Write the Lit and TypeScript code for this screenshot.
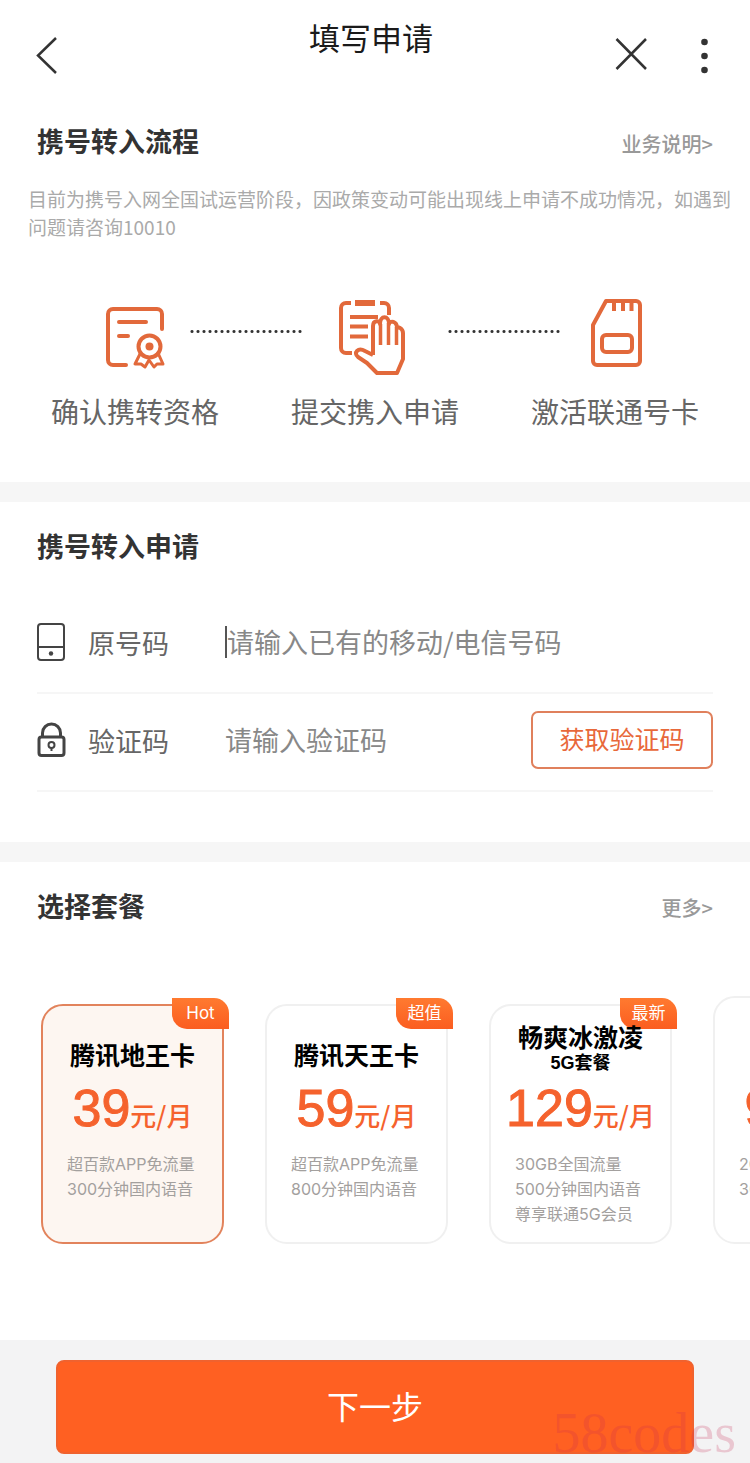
import { LitElement, html, css, nothing } from "lit";
import { customElement, property, state } from "lit/decorators.js";
import { classMap } from "lit/directives/class-map.js";

interface Plan {
  name: string;
  sub?: string;
  price: string;
  details: string[];
  badge?: string;
}

const PLANS: Plan[] = [
  { name: "腾讯地王卡", price: "39", details: ["超百款APP免流量", "300分钟国内语音"], badge: "Hot" },
  { name: "腾讯天王卡", price: "59", details: ["超百款APP免流量", "800分钟国内语音"], badge: "超值" },
  { name: "畅爽冰激凌", sub: "5G套餐", price: "129", details: ["30GB全国流量", "500分钟国内语音", "尊享联通5G会员"], badge: "最新" },
  { name: "", price: "99", details: ["20GB全国流量", "300分钟国内语音"] },
];

@customElement("plan-card")
export class PlanCard extends LitElement {
  @property({ attribute: false }) plan!: Plan;
  @property({ type: Boolean }) selected = false;

  static styles = css`
    :host {
      display: block;
      flex: none;
    }
    .card {
      position: relative;
      display: flex;
      flex-direction: column;
      box-sizing: border-box;
      width: 183px;
      min-height: 240px;
      padding: 0 0 13px;
      border: 2px solid #f0f0f0;
      border-radius: 22px;
      background: #fff;
      font: inherit;
      text-align: left;
      color: #000;
      cursor: pointer;
    }
    .tall {
      min-height: 248px;
      padding-top: 8px;
    }
    .selected {
      border-color: #e2835c;
      background: #fdf6f1;
    }
    .badge {
      position: absolute;
      top: -8px;
      right: -7px;
      width: 57px;
      border-radius: 0 15px 0 15px;
      background: linear-gradient(#ff7a30, #fb5d20);
      color: #fff;
      font-family: Inter, "Noto Sans CJK SC", sans-serif;
      font-size: 17px;
      line-height: 31px;
      text-align: center;
    }
    .head {
      position: relative;
      display: flex;
      flex-direction: column;
      justify-content: flex-end;
      align-items: center;
      height: 66px;
      font-weight: 700;
    }
    .name {
      font-size: 25px;
      line-height: 32px;
    }
    .sub {
      font-size: 18px;
      line-height: 18px;
    }
    .price {
      display: flex;
      justify-content: center;
      align-items: baseline;
      height: 80px;
      color: #f5622d;
      line-height: 72px;
    }
    .amount {
      font-size: 52px;
      -webkit-text-stroke: 1px currentColor;
    }
    .unit {
      font-family: "Noto Sans CJK SC", sans-serif;
      font-size: 26px;
      font-weight: 500;
    }
    .detail {
      padding-left: 24px;
      color: #a3a09e;
      font-family: Inter, "Noto Sans CJK SC", sans-serif;
      font-size: 16px;
      line-height: 25px;
      white-space: nowrap;
    }
  `;

  render() {
    const p = this.plan;
    return html`
      <button
        type="button"
        class=${classMap({ card: true, selected: this.selected, tall: !p.badge })}
        aria-pressed=${this.selected ? "true" : "false"}
      >
        ${p.badge ? html`<span class="badge">${p.badge}</span>` : nothing}
        <span class="head">
          <span class="name">${p.name}</span>
          ${p.sub ? html`<span class="sub">${p.sub}</span>` : nothing}
        </span>
        <span class="price"><span class="amount">${p.price}</span><span class="unit">元/月</span></span>
        ${p.details.map((d) => html`<span class="detail">${d}</span>`)}
      </button>
    `;
  }
}

@customElement("app-root")
export class AppRoot extends LitElement {
  @state() private selected = 0;

  static styles = css`
    :host {
      display: block;
      position: relative;
      background: #fff;
      color: #333;
      font-family: "Liberation Sans", "Noto Sans CJK SC", sans-serif;
    }
    * {
      box-sizing: border-box;
    }
    svg {
      display: block;
      fill: none;
      stroke: currentColor;
    }
    h1, h2, p, ol {
      margin: 0;
      padding: 0;
    }
    .header {
      display: grid;
      grid-template-columns: 1fr auto 1fr;
      align-items: start;
      height: 112px;
      padding: 16px 36px 0 28px;
    }
    .title {
      color: #1a1a1a;
      font-family: "Noto Sans CJK SC", sans-serif;
      font-size: 31px;
      font-weight: 400;
      line-height: 42px;
    }
    .icon-button {
      padding: 0;
      border: 0;
      background: none;
      color: #333;
      cursor: pointer;
    }
    .actions {
      display: flex;
      justify-content: flex-end;
      gap: 45px;
    }
    .section {
      padding: 0 37px;
      border-bottom: 20px solid #f6f6f6;
    }
    .section-head {
      display: flex;
      justify-content: space-between;
      align-items: center;
      height: 62px;
    }
    .section-title {
      font-size: 27px;
      font-weight: 700;
      line-height: 40px;
    }
    .link {
      color: #999;
      font-family: "Noto Sans CJK SC", sans-serif;
      font-size: 20px;
      font-weight: 500;
      text-decoration: none;
    }
    .notice {
      margin: 11px -19px 0 -9px;
      color: #aaa;
      font-family: "Noto Sans CJK SC", sans-serif;
      font-size: 19px;
      line-height: 28px;
    }
    .steps {
      display: flex;
      margin: 55px 14px 0;
      padding-bottom: 47px;
      list-style: none;
    }
    .step {
      display: flex;
      flex: none;
      flex-direction: column;
      align-items: center;
      gap: 17px;
      color: #666;
      font-size: 28px;
      line-height: 42px;
    }
    .step svg {
      color: #e2693b;
    }
    .dots {
      flex: 1;
      height: 3px;
      margin-top: 34px;
      background: radial-gradient(circle, #333 1px, transparent 2px) 0 0 / 6px 3px;
    }
    .dots-a {
      margin-left: -30px;
      margin-right: -12px;
    }
    .dots-b {
      margin-left: -12px;
      margin-right: -30px;
    }
    .apply {
      padding-top: 15px;
      padding-bottom: 50px;
    }
    .field {
      display: flex;
      align-items: center;
      height: 98px;
      padding-bottom: 4px;
      border-bottom: 2px solid #f6f6f6;
    }
    .fields {
      padding-top: 17px;
    }
    .field-icon {
      width: 51px;
      color: #444;
    }
    .label {
      width: 137px;
      color: #666;
      font-size: 27px;
    }
    .caret {
      width: 2px;
      height: 32px;
      background: #555;
    }
    .input {
      flex: 1;
      min-width: 0;
      padding: 0;
      border: 0;
      outline: 0;
      background: none;
      color: #333;
      font-family: "Noto Sans CJK SC", sans-serif;
      font-size: 27px;
      line-height: 40px;
    }
    .input::placeholder {
      color: #888;
      opacity: 1;
    }
    .code-button {
      width: 182px;
      height: 58px;
      padding: 0 0 4px;
      border: 2px solid #e0805c;
      border-radius: 7px;
      background: #fff;
      color: #e8683a;
      font-family: inherit;
      font-size: 25px;
      cursor: pointer;
    }
    .plans-head {
      padding: 29px 37px 0;
    }
    .plans {
      display: flex;
      align-items: flex-end;
      gap: 41px;
      padding: 72px 0 96px 41px;
      overflow: hidden;
    }
    .footer {
      padding: 20px 56px 9px;
      background: #f3f3f4;
    }
    .next {
      display: block;
      width: 100%;
      height: 94px;
      padding: 0 0 4px;
      border: 2px solid #f0622e;
      border-radius: 8px;
      background: #ff6022;
      color: #fff;
      font-family: "Noto Sans CJK SC", sans-serif;
      font-size: 32px;
      cursor: pointer;
    }
    .watermark {
      position: absolute;
      right: 14px;
      bottom: 0;
      color: rgba(200, 40, 80, 0.22);
      font-family: "Liberation Serif", serif;
      font-size: 56px;
      line-height: 60px;
      pointer-events: none;
    }
  `;

  render() {
    return html`
      <header class="header">
        <button class="icon-button" type="button" aria-label="返回">
          <svg width="40" height="72" viewBox="28 16 40 72" stroke-width="2.5"><path d="M56 38L38 55.500l18 17.500" /></svg>
        </button>
        <h1 class="title">填写申请</h1>
        <div class="actions">
          <button class="icon-button" type="button" aria-label="关闭">
            <svg width="36" height="72" viewBox="613 16 36 72" stroke-width="2.500"><path d="M616.500 39l29.500 30M646 39l-29.500 30" /></svg>
          </button>
          <button class="icon-button" type="button" aria-label="更多选项">
            <svg width="20" height="72" viewBox="694 16 20 72" stroke="none">
              <g fill="#333" stroke="none"><circle cx="704.500" cy="42" r="3.300" /><circle cx="704.500" cy="56" r="3.300" /><circle cx="704.500" cy="70" r="3.300" /></g>
            </svg>
          </button>
        </div>
      </header>

      <main>
        <section class="section">
          <div class="section-head">
            <h2 class="section-title">携号转入流程</h2>
            <a class="link" href="#intro">业务说明&gt;</a>
          </div>
          <p class="notice">目前为携号入网全国试运营阶段，因政策变动可能出现线上申请不成功情况，如遇到问题请咨询10010</p>
          <ol class="steps">
            <li class="step">
              <svg width="64" height="80" viewBox="104 297 64 80" stroke-width="4" stroke-linecap="round" stroke-linejoin="round">
                <path d="M127 366h-13a5 5 0 0 1-5-5v-46a5 5 0 0 1 5-5h44a5 5 0 0 1 5 5v15" />
                <path d="M120 323h27M120 337h9" />
                <circle cx="150.500" cy="347.500" r="11" />
                <circle cx="150.500" cy="347.500" r="4" fill="currentColor" stroke="none" />
                <path d="M141 355l-5 10h6l4 3 4-7 5 7 3-3h6l-5-11" stroke-width="3" />
              </svg>
              确认携转资格
            </li>
            <li class="dots dots-a" aria-hidden="true"></li>
            <li class="step">
              <svg width="76" height="80" viewBox="338 297 76 80" stroke-width="4" stroke-linejoin="round">
                <path d="M352 304h-5a5 5 0 0 0-5 5v40a5 5 0 0 0 5 5h6M381 304h4a5 5 0 0 1 5 5v7" />
                <path d="M356 304h20" stroke-width="6" />
                <path d="M351 318h28M351 327.500h18M351 337.500h18" />
                <path d="M374 356v-29c0-6 7-6 7-2 0-9 9-9 9 0 1-4 8-3 8 4 0-2 6 0 6 5v26l-6 14h-20l-10-10-9-6c-5-4 0-10 7-6l8 4" />
                <path d="M381.500 325v21M389.500 324v22M397.500 328v18" stroke-width="3.500" />
              </svg>
              提交携入申请
            </li>
            <li class="dots dots-b" aria-hidden="true"></li>
            <li class="step">
              <svg width="56" height="80" viewBox="587 297 56 80" stroke-width="4" stroke-linejoin="round">
                <path d="M606 302h30a4 4 0 0 1 4 4v56a4 4 0 0 1-4 4h-39a4 4 0 0 1-4-4v-36z" />
                <path d="M614 303v9M623 303v9M631.500 303v9" />
                <rect x="602" y="336" width="30" height="17" rx="4" />
              </svg>
              激活联通号卡
            </li>
          </ol>
        </section>

        <section class="section apply">
          <div class="section-head"><h2 class="section-title">携号转入申请</h2></div>
          <div class="fields">
            <div class="field">
              <span class="field-icon">
                <svg width="28" height="38" viewBox="0 0 28 38" stroke-width="2">
                  <rect x="1" y="1" width="26" height="36" rx="3" /><path d="M1 24h26" />
                  <circle cx="14" cy="30.500" r="2.200" fill="currentColor" stroke="none" />
                </svg>
              </span>
              <label class="label" for="phone">原号码</label>
              <span class="caret"></span>
              <input class="input" id="phone" type="tel" placeholder="请输入已有的移动/电信号码" />
            </div>
            <div class="field">
              <span class="field-icon">
                <svg width="29" height="36" viewBox="0 0 29 36" stroke-width="3">
                  <rect x="2" y="15" width="25" height="18.500" rx="2.500" />
                  <path d="M5.500 15v-4a9 9 0 0 1 18 0v4" />
                  <circle cx="14.500" cy="23" r="3" stroke-width="2" /><path d="M14.500 26v3" stroke-width="2" />
                </svg>
              </span>
              <label class="label" for="code">验证码</label>
              <input class="input" id="code" type="text" placeholder="请输入验证码" />
              <button class="code-button" type="button">获取验证码</button>
            </div>
          </div>
        </section>

        <section>
          <div class="section-head plans-head">
            <h2 class="section-title">选择套餐</h2>
            <a class="link" href="#plans">更多&gt;</a>
          </div>
          <div class="plans">
            ${PLANS.map(
              (p, i) => html`<plan-card .plan=${p} ?selected=${i === this.selected} @click=${() => (this.selected = i)}></plan-card>`
            )}
          </div>
        </section>
      </main>

      <footer class="footer">
        <button class="next" type="button">下一步</button>
      </footer>
      <span class="watermark">58codes</span>
    `;
  }
}
